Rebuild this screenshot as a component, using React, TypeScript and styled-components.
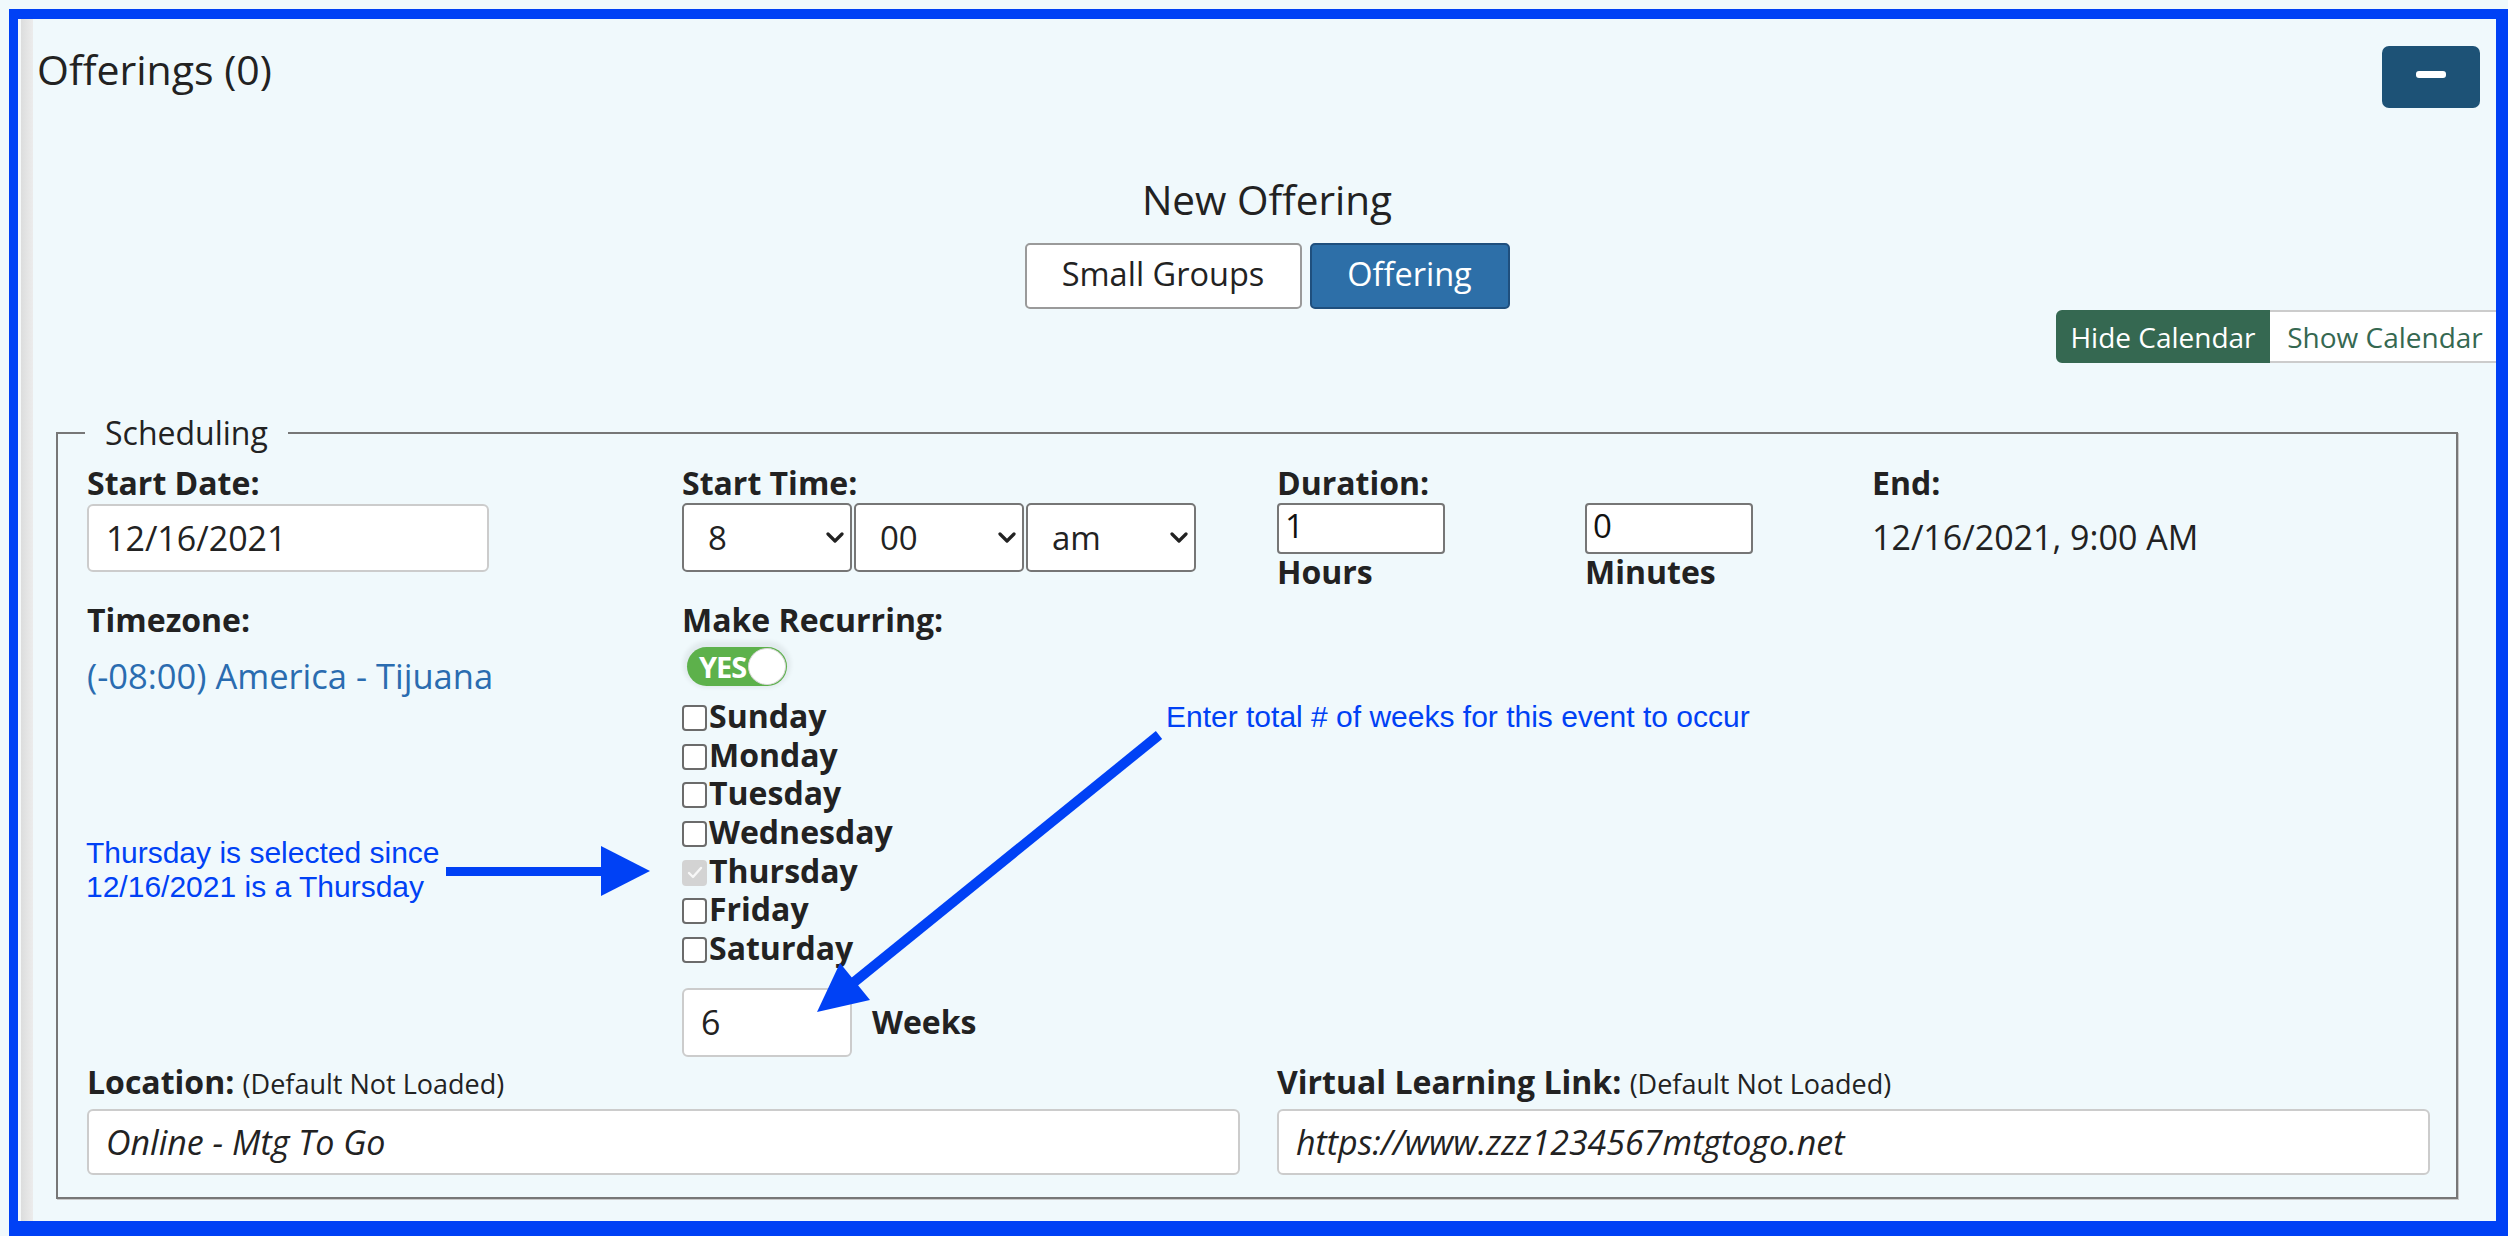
import React from 'react';
import styled, { createGlobalStyle } from 'styled-components';

const ANNOT = '#0041f5';

const GlobalStyle = createGlobalStyle`
  html, body { margin: 0; padding: 0; background: #f0f9fc; overflow: hidden; }
  body { font-family: 'Open Sans', 'Noto Sans', sans-serif; color: #222; }
  #root { padding: 9px 0 0 9px; }
  * { box-sizing: border-box; }
`;

const Frame = styled.div`
  position: relative;
  width: 2499px;
  height: 1227px;
  border-style: solid;
  border-color: ${ANNOT};
  border-width: 10px 12px 15px 9px;
  overflow: hidden;
  background: linear-gradient(
    to right,
    #f5f8f9 0,
    #f5f8f9 3px,
    #dcdddd 3px,
    #ececec 15px,
    #f0f9fc 15px
  );
`;

const Header = styled.div`
  display: flex;
  justify-content: space-between;
  align-items: flex-start;
  padding: 0 16px 0 19px;
`;

const Title = styled.h2`
  margin: 25px 0 0;
  font-size: 41px;
  line-height: 50px;
  font-weight: 400;
  color: #222;
`;

const CollapseButton = styled.button`
  margin-top: 27px;
  width: 98px;
  height: 62px;
  border: none;
  border-radius: 7px;
  background: #1d5276;
  display: flex;
  align-items: center;
  justify-content: center;
  padding: 0;
`;

const MinusBar = styled.span`
  width: 30px;
  height: 7px;
  border-radius: 3px;
  background: #fff;
  margin-bottom: 5px;
`;

const NewOfferingBlock = styled.div`
  display: flex;
  flex-direction: column;
  align-items: center;
  padding-left: 20px;
  margin-top: 69px;
`;

const Heading = styled.h3`
  margin: 0;
  font-size: 40.5px;
  line-height: 46px;
  font-weight: 500;
  color: #222;
`;

const ModeGroup = styled.div`
  display: flex;
  gap: 8px;
  margin-top: 20px;
`;

const ModeButton = styled.button<{ $active?: boolean; $w: number }>`
  width: ${(p) => p.$w}px;
  height: 66px;
  padding: 0 0 5px;
  border-radius: 5px;
  font-family: 'Open Sans', sans-serif;
  font-size: 32.5px;
  border: 2px solid ${(p) => (p.$active ? '#1f4f7d' : '#9a9a9a')};
  background: ${(p) => (p.$active ? '#2d6fa8' : '#fff')};
  color: ${(p) => (p.$active ? '#fff' : '#222')};
`;

const CalendarRow = styled.div`
  display: flex;
  justify-content: flex-end;
  margin: 1px -6px 0 0;
`;

const CalButton = styled.button<{ $active?: boolean; $w: number }>`
  width: ${(p) => p.$w}px;
  height: 53px;
  padding: 0;
  font-family: 'Open Sans', sans-serif;
  font-size: 28px;
  border: 2px solid ${(p) => (p.$active ? '#356851' : '#cccccc')};
  border-left-width: ${(p) => (p.$active ? 2 : 0)}px;
  border-radius: ${(p) => (p.$active ? '6px 0 0 6px' : '0 6px 6px 0')};
  background: ${(p) => (p.$active ? '#356851' : '#fff')};
  color: ${(p) => (p.$active ? '#fff' : '#356851')};
`;

const Fieldset = styled.fieldset`
  margin: 48px 38px 0;
  border: 2px solid #777;
  box-shadow: 1px 1px 0 #c9c9c9;
  padding: 8px 26px 22px 29px;
  min-width: 0;
`;

const Legend = styled.legend`
  font-size: 32px;
  line-height: 44px;
  padding: 0 20px;
  margin-left: -2px;
  color: #222;
`;

const Grid = styled.div<{ $cols: number; $mt: number }>`
  display: grid;
  grid-template-columns: repeat(${(p) => p.$cols}, 1fr);
  column-gap: 37px;
  margin-top: ${(p) => p.$mt}px;
`;

const Col = styled.div`
  display: flex;
  flex-direction: column;
  align-items: flex-start;
  min-width: 0;
`;

const Label = styled.label<{ $mt?: number }>`
  display: block;
  font-weight: 700;
  font-size: 32px;
  line-height: 40px;
  color: #222;
  margin-top: ${(p) => p.$mt ?? 0}px;
  white-space: nowrap;
`;

const Hint = styled.span`
  font-weight: 400;
  font-size: 27px;
`;

const TextInput = styled.input<{ $w?: string; $h: number; $italic?: boolean; $mt?: number }>`
  width: ${(p) => p.$w ?? '100%'};
  height: ${(p) => p.$h}px;
  border: 2px solid #cccccc;
  border-radius: 6px;
  padding: 0 17px;
  margin: ${(p) => p.$mt ?? 1}px 0 0;
  font-family: 'Open Sans', sans-serif;
  font-size: 34px;
  font-style: ${(p) => (p.$italic ? 'italic' : 'normal')};
  color: #222;
  background: #fff;
  outline: none;
`;

const SelectRow = styled.div`
  display: flex;
  gap: 2px;
`;

const SelectWrap = styled.div`
  position: relative;
  width: 170px;
  height: 69px;
`;

const Select = styled.select`
  appearance: none;
  -webkit-appearance: none;
  width: 100%;
  height: 100%;
  border: 2px solid #767676;
  border-radius: 5px;
  background: #fff;
  padding: 0 0 0 24px;
  font-family: 'Open Sans', sans-serif;
  font-size: 33px;
  color: #222;
  outline: none;
`;

const Chevron = styled.svg`
  position: absolute;
  right: 8px;
  top: 28px;
  width: 18px;
  height: 13px;
  pointer-events: none;
`;

const DurationGrid = styled.div`
  display: grid;
  grid-template-columns: 308px 1fr;
`;

const NumberInput = styled.input`
  width: 168px;
  height: 51px;
  border: 2px solid #767676;
  border-radius: 4px;
  padding: 0 6px 6px;
  font-family: 'Open Sans', sans-serif;
  font-size: 33px;
  color: #111;
  background: #fff;
  outline: none;
`;

const EndText = styled.div`
  font-size: 34px;
  line-height: 69px;
  color: #222;
`;

const ZoneText = styled.div`
  margin-top: 15.6px;
  font-size: 34.5px;
  line-height: 40px;
  color: #2a6cb0;
`;

const ToggleTrack = styled.div`
  position: relative;
  margin: 7px 0 0 5px;
  width: 100px;
  height: 39px;
  border-radius: 20px;
  background: #5db14b;
  box-shadow: 0 -2px 4px 4px rgba(0, 0, 0, 0.06);
`;

const ToggleText = styled.span`
  display: block;
  padding-left: 12px;
  font-size: 29px;
  font-weight: 700;
  line-height: 39px;
  letter-spacing: -1px;
  color: #fff;
`;

const ToggleKnob = styled.span`
  position: absolute;
  left: 61px;
  top: 1px;
  width: 38px;
  height: 37px;
  border-radius: 50%;
  background: #fff;
  border: 1px solid #d6d6d6;
`;

const DayList = styled.div`
  margin-top: 11px;
  display: flex;
  flex-direction: column;
`;

const DayRow = styled.label`
  display: flex;
  align-items: flex-start;
  gap: 2px;
  height: 38.7px;
  line-height: 38.7px;
  font-size: 32px;
  font-weight: 700;
  color: #222;
`;

const CheckBox = styled.span<{ $checked?: boolean }>`
  flex-shrink: 0;
  margin-top: 8px;
  width: 25px;
  height: 26px;
  border-radius: 4px;
  border: 2px solid ${(p) => (p.$checked ? '#d3d3d3' : '#6b6b6b')};
  background: ${(p) => (p.$checked ? '#d3d3d3' : '#fff')};
  display: flex;
  align-items: center;
  justify-content: center;
`;

const WeeksRow = styled.div`
  margin-top: 19px;
  display: flex;
  align-items: center;
  gap: 20px;
`;

const Note = styled.div<{ $x: number; $y: number }>`
  position: absolute;
  left: ${(p) => p.$x}px;
  top: ${(p) => p.$y}px;
  font-family: 'Liberation Sans', Arial, sans-serif;
  font-size: 30px;
  line-height: 34px;
  color: ${ANNOT};
  white-space: nowrap;
`;

const ArrowSvg = styled.svg<{ $x: number; $y: number }>`
  position: absolute;
  left: ${(p) => p.$x}px;
  top: ${(p) => p.$y}px;
  pointer-events: none;
`;

const days = ['Sunday', 'Monday', 'Tuesday', 'Wednesday', 'Thursday', 'Friday', 'Saturday'];

const TimeSelect: React.FC<{ value: string; options: string[] }> = ({ value, options }) => (
  <SelectWrap>
    <Select defaultValue={value}>
      {options.map((o) => (
        <option key={o} value={o}>
          {o}
        </option>
      ))}
    </Select>
    <Chevron viewBox="0 0 18 13">
      <polyline points="2,3 9,10 16,3" fill="none" stroke="#222" strokeWidth="3.2" strokeLinecap="round" strokeLinejoin="round" />
    </Chevron>
  </SelectWrap>
);

export default function App() {
  const hours = Array.from({ length: 12 }, (_, i) => String(i + 1));
  const mins = ['00', '15', '30', '45'];
  return (
    <>
      <GlobalStyle />
      <Frame>
        <Header>
          <Title>Offerings (0)</Title>
          <CollapseButton aria-label="collapse">
            <MinusBar />
          </CollapseButton>
        </Header>

        <NewOfferingBlock>
          <Heading>New Offering</Heading>
          <ModeGroup>
            <ModeButton $w={277}>Small Groups</ModeButton>
            <ModeButton $w={200} $active>
              Offering
            </ModeButton>
          </ModeGroup>
        </NewOfferingBlock>

        <CalendarRow>
          <CalButton $w={214} $active>
            Hide Calendar
          </CalButton>
          <CalButton $w={232}>Show Calendar</CalButton>
        </CalendarRow>

        <Fieldset>
          <Legend>Scheduling</Legend>

          <Grid $cols={4} $mt={0}>
            <Col>
              <Label>Start Date:</Label>
              <TextInput $w="402px" $h={68} defaultValue="12/16/2021" />
            </Col>
            <Col>
              <Label>Start Time:</Label>
              <SelectRow>
                <TimeSelect value="8" options={hours} />
                <TimeSelect value="00" options={mins} />
                <TimeSelect value="am" options={['am', 'pm']} />
              </SelectRow>
            </Col>
            <Col>
              <Label>Duration:</Label>
              <DurationGrid>
                <Col>
                  <NumberInput defaultValue="1" />
                  <Label $mt={-2}>Hours</Label>
                </Col>
                <Col>
                  <NumberInput defaultValue="0" />
                  <Label $mt={-2}>Minutes</Label>
                </Col>
              </DurationGrid>
            </Col>
            <Col>
              <Label>End:</Label>
              <EndText>12/16/2021, 9:00 AM</EndText>
            </Col>
          </Grid>

          <Grid $cols={4} $mt={8}>
            <Col>
              <Label>Timezone:</Label>
              <ZoneText>(-08:00) America - Tijuana</ZoneText>
            </Col>
            <Col>
              <Label>Make Recurring:</Label>
              <ToggleTrack>
                <ToggleText>YES</ToggleText>
                <ToggleKnob />
              </ToggleTrack>
              <DayList>
                {days.map((d) => {
                  const checked = d === 'Thursday';
                  return (
                    <DayRow key={d}>
                      <CheckBox $checked={checked}>
                        {checked && (
                          <svg width="16" height="14" viewBox="0 0 16 14">
                            <polyline points="2,7 6,11 14,2" fill="none" stroke="#f7f7f7" strokeWidth="2.4" strokeLinecap="round" strokeLinejoin="round" />
                          </svg>
                        )}
                      </CheckBox>
                      {d}
                    </DayRow>
                  );
                })}
              </DayList>
              <WeeksRow>
                <TextInput $w="170px" $h={69} defaultValue="6" />
                <Label>Weeks</Label>
              </WeeksRow>
            </Col>
            <Col />
            <Col />
          </Grid>

          <Grid $cols={2} $mt={5.6}>
            <Col>
              <Label>
                Location: <Hint>(Default Not Loaded)</Hint>
              </Label>
              <TextInput $h={66} $italic $mt={4.4} defaultValue="Online - Mtg To Go" />
            </Col>
            <Col>
              <Label>
                Virtual Learning Link: <Hint>(Default Not Loaded)</Hint>
              </Label>
              <TextInput $h={66} $italic $mt={4.4} defaultValue="https://www.zzz1234567mtgtogo.net" />
            </Col>
          </Grid>
        </Fieldset>

        <Note $x={68} $y={816.6}>
          Thursday is selected since
          <br />
          12/16/2021 is a Thursday
        </Note>
        <Note $x={1148} $y={680.6}>
          Enter total # of weeks for this event to occur
        </Note>

        <ArrowSvg $x={422} $y={821} width={215} height={60} viewBox="0 0 215 60">
          <rect x="6" y="27" width="160" height="9" fill={ANNOT} />
          <polygon points="161,6 210,31 161,56" fill={ANNOT} />
        </ArrowSvg>
        <ArrowSvg $x={787} $y={706} width={365} height={295} viewBox="0 0 365 295">
          <line x1="354" y1="10" x2="48" y2="258" stroke={ANNOT} strokeWidth="10" />
          <polygon points="12,287 35,238 65,275" fill={ANNOT} />
        </ArrowSvg>
      </Frame>
    </>
  );
}
